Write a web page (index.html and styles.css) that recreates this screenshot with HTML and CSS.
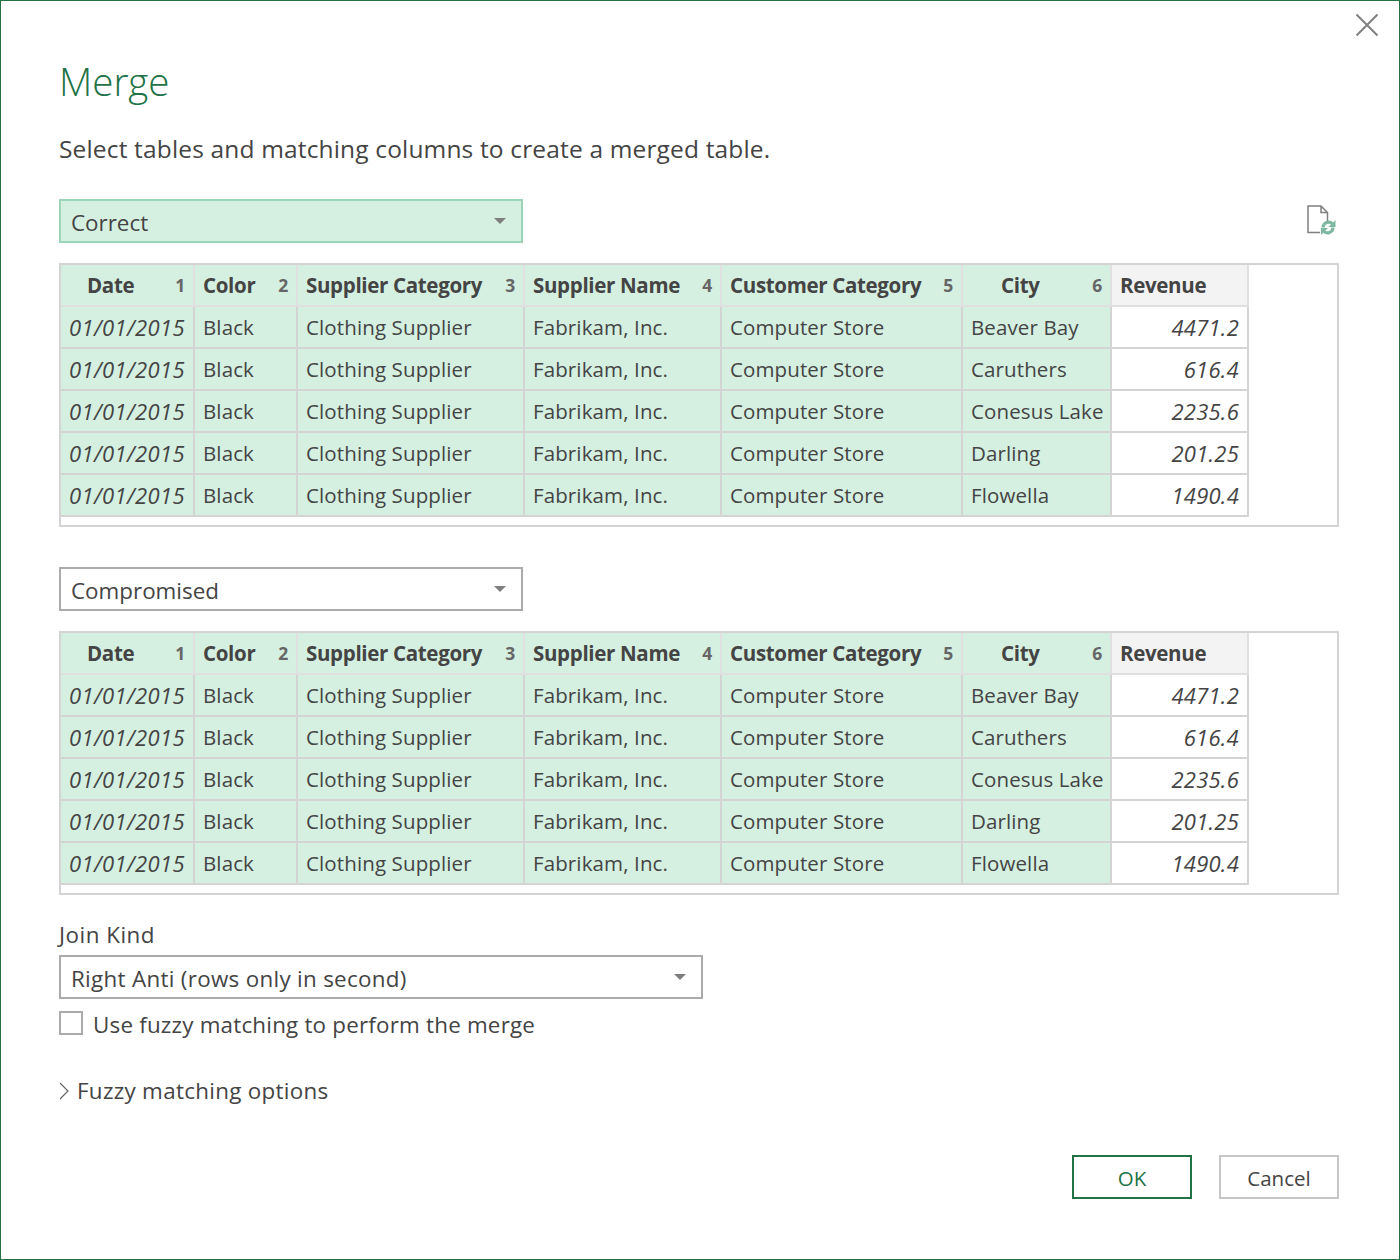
FILE: index.html
```html
<!DOCTYPE html>
<html lang="en">
<head>
    <meta charset="UTF-8">
    <title>Merge</title>
    <link rel="stylesheet" href="styles.css">
</head>
<body>

<div class="dialog">
    <button class="close" aria-label="Close">
        <svg width="24" height="24" viewBox="0 0 24 24"><path d="M1.5 1.5 22.5 22.5M22.5 1.5 1.5 22.5" stroke="#808080" stroke-width="2" fill="none"/></svg>
    </button>

    <h1>Merge</h1>
    <p class="intro">Select tables and matching columns to create a merged table.</p>

    <div class="select-row">
        <div class="select select-active">Correct<span class="arrow"></span></div>
        <svg class="doc-icon" width="30" height="30" viewBox="0 0 30 30">
            <path d="M20.5 16V7.5L14 1H1V27.5H13M14 1V7.5H20.5" fill="none" stroke="#808080" stroke-width="1.5"/>
            <path d="M16 22.5A5.5 5.5 0 0 1 25.5 19" fill="none" stroke="#7db8a0" stroke-width="3.2"/>
            <path d="M28.5 15V22H21.5Z" fill="#7db8a0"/>
            <path d="M26 22.5A5.5 5.5 0 0 1 16.5 26" fill="none" stroke="#7db8a0" stroke-width="3.2"/>
            <path d="M14 30V23H21Z" fill="#7db8a0"/>
        </svg>
    </div>

    <div class="table-box">
        <table>
            <thead>
                <tr>
                    <th class="col-date"><div class="th-in"><span class="name-date">Date</span><span class="idx">1</span></div></th>
                    <th class="col-color"><div class="th-in"><span>Color</span><span class="idx">2</span></div></th>
                    <th class="col-scat"><div class="th-in"><span>Supplier Category</span><span class="idx">3</span></div></th>
                    <th class="col-sname"><div class="th-in"><span>Supplier Name</span><span class="idx">4</span></div></th>
                    <th class="col-ccat"><div class="th-in"><span>Customer Category</span><span class="idx">5</span></div></th>
                    <th class="col-city"><div class="th-in"><span class="name-city">City</span><span class="idx">6</span></div></th>
                    <th class="col-rev plain"><div class="th-in"><span>Revenue</span></div></th>
                </tr>
            </thead>
            <tbody>
                <tr><td class="date">01/01/2015</td><td>Black</td><td>Clothing Supplier</td><td>Fabrikam, Inc.</td><td>Computer Store</td><td>Beaver Bay</td><td class="num">4471.2</td></tr>
                <tr><td class="date">01/01/2015</td><td>Black</td><td>Clothing Supplier</td><td>Fabrikam, Inc.</td><td>Computer Store</td><td>Caruthers</td><td class="num">616.4</td></tr>
                <tr><td class="date">01/01/2015</td><td>Black</td><td>Clothing Supplier</td><td>Fabrikam, Inc.</td><td>Computer Store</td><td>Conesus Lake</td><td class="num">2235.6</td></tr>
                <tr><td class="date">01/01/2015</td><td>Black</td><td>Clothing Supplier</td><td>Fabrikam, Inc.</td><td>Computer Store</td><td>Darling</td><td class="num">201.25</td></tr>
                <tr><td class="date">01/01/2015</td><td>Black</td><td>Clothing Supplier</td><td>Fabrikam, Inc.</td><td>Computer Store</td><td>Flowella</td><td class="num">1490.4</td></tr>
            </tbody>
        </table>
    </div>

    <div class="select-row second">
        <div class="select">Compromised<span class="arrow"></span></div>
    </div>

    <div class="table-box">
        <table>
            <thead>
                <tr>
                    <th class="col-date"><div class="th-in"><span class="name-date">Date</span><span class="idx">1</span></div></th>
                    <th class="col-color"><div class="th-in"><span>Color</span><span class="idx">2</span></div></th>
                    <th class="col-scat"><div class="th-in"><span>Supplier Category</span><span class="idx">3</span></div></th>
                    <th class="col-sname"><div class="th-in"><span>Supplier Name</span><span class="idx">4</span></div></th>
                    <th class="col-ccat"><div class="th-in"><span>Customer Category</span><span class="idx">5</span></div></th>
                    <th class="col-city"><div class="th-in"><span class="name-city">City</span><span class="idx">6</span></div></th>
                    <th class="col-rev plain"><div class="th-in"><span>Revenue</span></div></th>
                </tr>
            </thead>
            <tbody>
                <tr><td class="date">01/01/2015</td><td>Black</td><td>Clothing Supplier</td><td>Fabrikam, Inc.</td><td>Computer Store</td><td>Beaver Bay</td><td class="num">4471.2</td></tr>
                <tr><td class="date">01/01/2015</td><td>Black</td><td>Clothing Supplier</td><td>Fabrikam, Inc.</td><td>Computer Store</td><td>Caruthers</td><td class="num">616.4</td></tr>
                <tr><td class="date">01/01/2015</td><td>Black</td><td>Clothing Supplier</td><td>Fabrikam, Inc.</td><td>Computer Store</td><td>Conesus Lake</td><td class="num">2235.6</td></tr>
                <tr><td class="date">01/01/2015</td><td>Black</td><td>Clothing Supplier</td><td>Fabrikam, Inc.</td><td>Computer Store</td><td>Darling</td><td class="num">201.25</td></tr>
                <tr><td class="date">01/01/2015</td><td>Black</td><td>Clothing Supplier</td><td>Fabrikam, Inc.</td><td>Computer Store</td><td>Flowella</td><td class="num">1490.4</td></tr>
            </tbody>
        </table>
    </div>

    <div class="join-label">Join Kind</div>
    <div class="select select-wide">Right Anti (rows only in second)<span class="arrow"></span></div>

    <label class="check-row"><span class="checkbox"></span>Use fuzzy matching to perform the merge</label>

    <div class="expander">
        <svg width="10" height="18" viewBox="0 0 10 18"><path d="M1 1 9 9 1 17" fill="none" stroke="#666" stroke-width="1.2"/></svg>
        Fuzzy matching options
    </div>

    <div class="buttons">
        <button class="btn btn-ok">OK</button>
        <button class="btn">Cancel</button>
    </div>
</div>

</body>
</html>
```

FILE: styles.css
```css
body {
    margin: 0;
    background-color: #ffffff;
    color: #444444;
    font-family: "Open Sans", "Noto Sans", sans-serif;
}
.dialog {
    position: relative;
    box-sizing: border-box;
    width: 1400px;
    height: 1260px;
    padding: 53px 60px 0 58px;
    border: 1px solid #217346;
}
.close {
    position: absolute;
    top: 12px;
    right: 20px;
    padding: 0;
    border: 0;
    background: none;
    line-height: 0;
}
h1 {
    margin: 0;
    color: #217346;
    font-size: 38.5px;
    font-weight: 300;
    line-height: 54px;
}
.intro {
    margin: 23px 0 0;
    font-size: 24.5px;
    line-height: 36px;
    letter-spacing: 0.16px;
}
.select-row {
    display: flex;
    justify-content: space-between;
    align-items: flex-start;
    margin-top: 32px;
}
.select-row.second {
    margin-top: 40px;
}
.select {
    display: flex;
    justify-content: space-between;
    align-items: center;
    box-sizing: border-box;
    width: 464px;
    height: 44px;
    padding: 2px 15px 0 10px;
    border: 2px solid #ababab;
    font-size: 22.4px;
}
.select-active {
    border-color: #9bd4b6;
    background-color: #d5f0e1;
}
.select-wide {
    width: 644px;
    letter-spacing: 0.3px;
}
.arrow {
    width: 0;
    height: 0;
    margin-bottom: 2px;
    border-left: 6px solid transparent;
    border-right: 6px solid transparent;
    border-top: 6px solid #7f7f7f;
}
.doc-icon {
    margin: 6px 2px 0 0;
}
.table-box {
    box-sizing: border-box;
    height: 264px;
    margin-top: 20px;
    border: 2px solid #d4d4d4;
}
table {
    border-collapse: separate;
    border-spacing: 0;
    table-layout: fixed;
    width: 1188px;
}
.col-date { width: 134px; }
.col-color { width: 103px; }
.col-scat { width: 227px; }
.col-sname { width: 197px; }
.col-ccat { width: 241px; }
.col-city { width: 149px; }
.col-rev { width: 137px; }
th, td {
    box-sizing: border-box;
    height: 42px;
    padding: 0 8px;
    border-right: 2px solid #d4d4d4;
    border-bottom: 2px solid #d4d4d4;
    background-color: #d5f0e1;
    font-size: 20.5px;
    text-align: left;
    white-space: nowrap;
    overflow: hidden;
}
td {
    letter-spacing: 0.12px;
}
th {
    border-color: #e0e0e0;
    font-weight: 700;
    letter-spacing: -0.33px;
}
th.plain {
    background-color: #f3f3f3;
}
.th-in {
    display: flex;
    justify-content: space-between;
    align-items: center;
}
.idx {
    color: #666666;
    font-size: 17.5px;
}
.name-date {
    padding-left: 18px;
}
.name-city {
    padding-left: 30px;
}
td.date, td.num {
    font-size: 22px;
    font-style: italic;
    letter-spacing: 0.35px;
}
td.num {
    background-color: #ffffff;
    text-align: right;
    letter-spacing: 0.25px;
}
.join-label {
    margin: 24px 0 4px;
    font-size: 22.4px;
    line-height: 32px;
    letter-spacing: 0.5px;
}
.check-row {
    display: flex;
    align-items: center;
    gap: 10px;
    margin-top: 12px;
    font-size: 22.4px;
    line-height: 28px;
    letter-spacing: 0.2px;
}
.checkbox {
    box-sizing: border-box;
    width: 24px;
    height: 24px;
    margin-bottom: 4px;
    border: 2px solid #ababab;
}
.expander {
    display: flex;
    align-items: center;
    gap: 8px;
    margin-top: 36px;
    font-size: 22.4px;
    line-height: 32px;
    letter-spacing: 0.3px;
}
.buttons {
    display: flex;
    justify-content: flex-end;
    gap: 27px;
    margin-top: 48px;
}
.btn {
    box-sizing: border-box;
    width: 120px;
    height: 44px;
    padding-top: 2px;
    border: 2px solid #c6c6c6;
    background-color: #ffffff;
    color: #444444;
    font-family: inherit;
    font-size: 20.5px;
}
.btn-ok {
    border-color: #217346;
    color: #217346;
}
```
